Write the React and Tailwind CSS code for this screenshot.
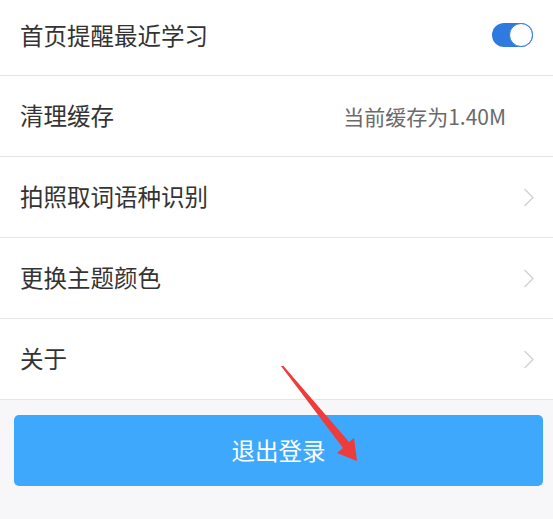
import React from "react";

const font = { fontFamily: '"Noto Sans CJK SC", "Noto Sans", sans-serif' };

function Chevron() {
  return (
    <svg width="12" height="19" viewBox="0 0 12 19" className="shrink-0">
      <path d="M1.5 1 L10 9.5 L1.5 18" fill="none" stroke="#d2d2d2" strokeWidth="1.4" />
    </svg>
  );
}

function Row({ label, right, first }) {
  return (
    <div
      className={`flex items-center justify-between border-b border-[#e6e6e6] bg-white pl-[20px] ${
        first ? "h-[76px] pb-[4px] pr-[20px]" : "h-[81px] pr-[18px]"
      }`}
    >
      <span className="text-[23.5px] leading-none text-[#333333]">{label}</span>
      {right}
    </div>
  );
}

export default function App() {
  return (
    <div className="relative h-[519px] w-[553px] overflow-hidden bg-[#f7f7f9]" style={font}>
      <Row
        first
        label="首页提醒最近学习"
        right={
          <div className="relative -mt-[2px] h-[24px] w-[41px] rounded-full bg-[#2f7adf]">
            <div className="absolute right-0 top-0 h-[24px] w-[24px] rounded-full border border-[#2f7adf] bg-white" />
          </div>
        }
      />
      <Row
        label="清理缓存"
        right={<span className="mr-[29px] text-[21px] leading-none text-[#6a6a6a]">当前缓存为1.40M</span>}
      />
      <Row label="拍照取词语种识别" right={<Chevron />} />
      <Row label="更换主题颜色" right={<Chevron />} />
      <Row label="关于" right={<Chevron />} />

      <div className="ml-[14px] mr-[10px] mt-[15px] flex h-[71px] items-center justify-center rounded-[5px] bg-[#3ea8fd]">
        <span className="text-[23.5px] leading-none text-white">退出登录</span>
      </div>

      <svg className="pointer-events-none absolute left-0 top-0" width="553" height="519" viewBox="0 0 553 519">
        <path d="M281 366 L283.5 366 L349 442 L354 438 L357 461 L337 453 L343 448 Z" fill="#ee3b3b" />
      </svg>
    </div>
  );
}
